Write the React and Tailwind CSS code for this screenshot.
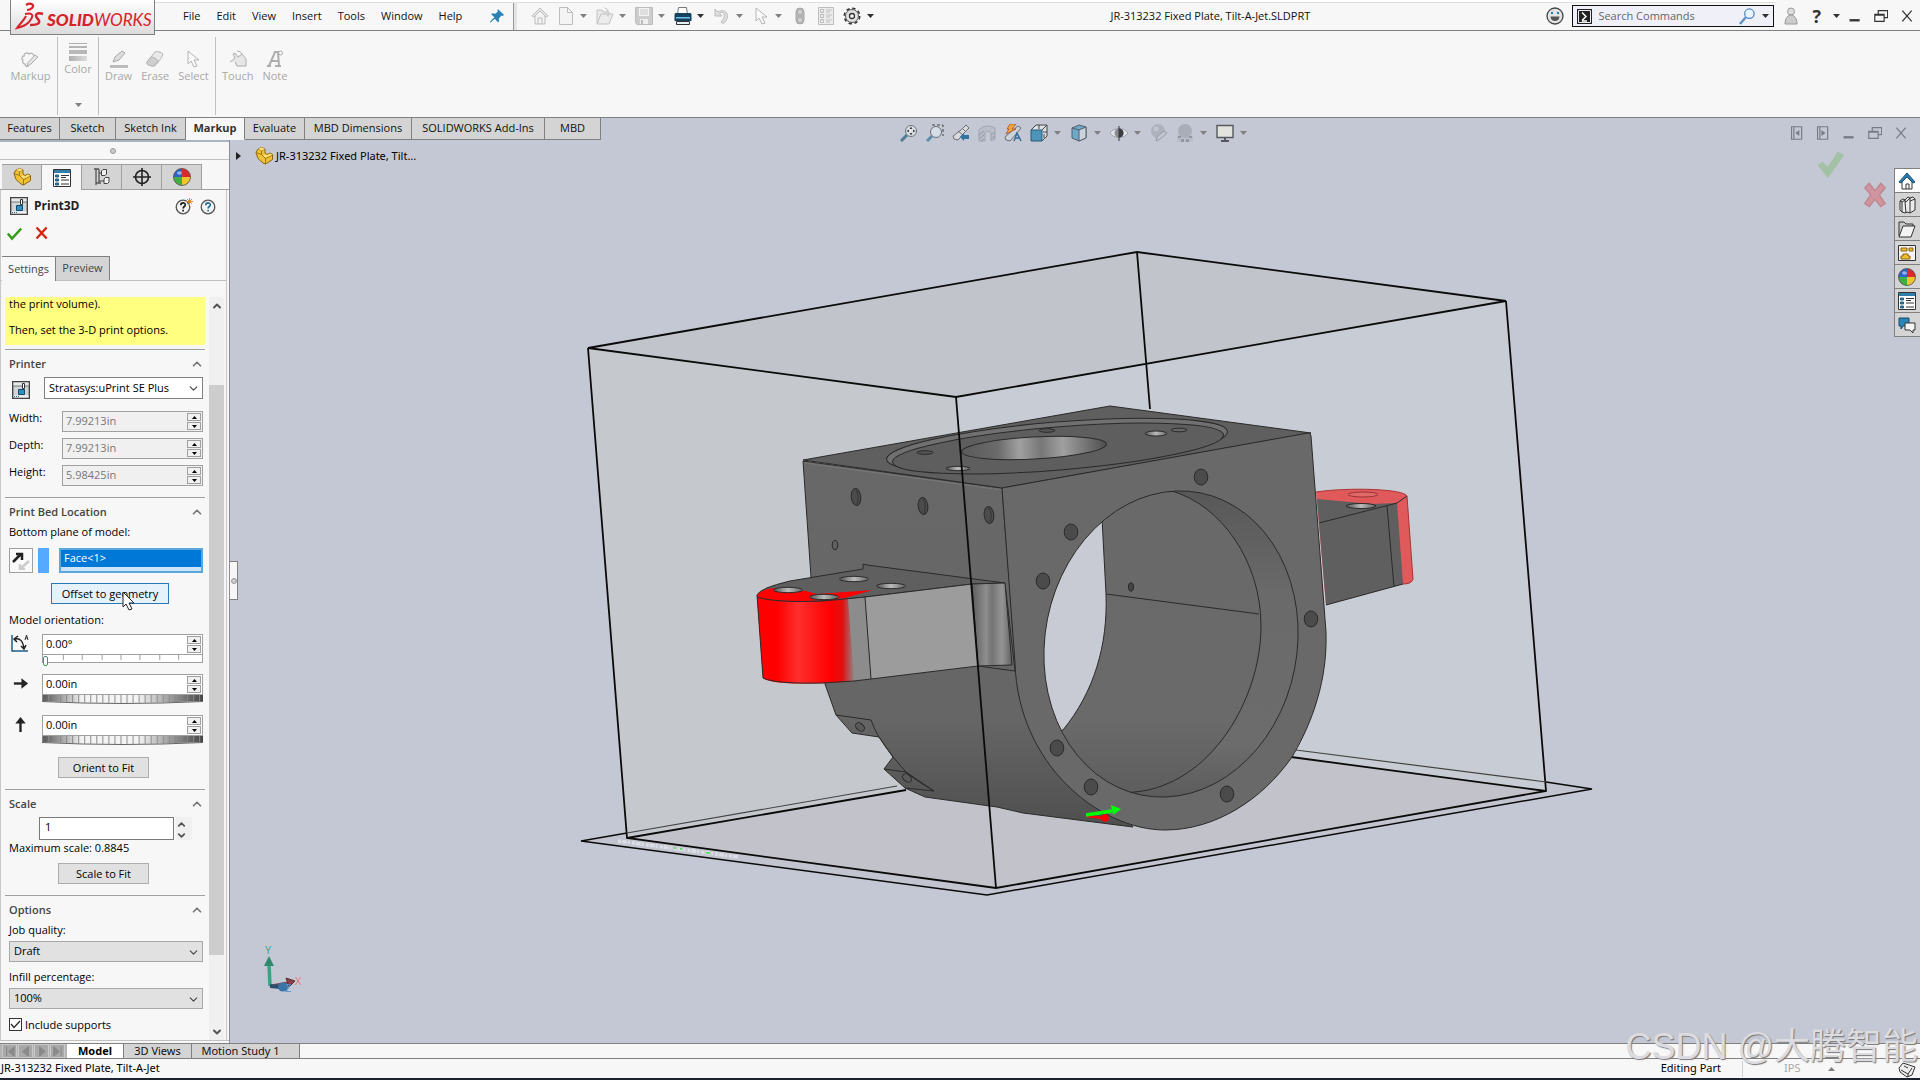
import { useState } from 'react';
import { ChevronUp, ChevronDown } from 'lucide-react';

const Svg = ({ size = 18, children, className = '' }) => (
  <svg width={size} height={size} viewBox="0 0 18 18" fill="none" className={`shrink-0 ${className}`} aria-hidden="true">
    {children}
  </svg>
);

const Caret = ({ dark, up }) => (
  <svg width="7" height="4" viewBox="0 0 7 4" className="shrink-0" aria-hidden="true">
    <path d={up ? 'M0 4h7L3.5 0z' : 'M0 0h7L3.5 4z'} fill={dark ? '#303030' : '#808080'} />
  </svg>
);

// ---- ribbon icons ----
const MarkupIcon = () => (
  <Svg>
    <path d="M8 16c-2 1-4 0-4-2-2 0-3-2-2-4-2-1-1-4 1-4 0-3 3-4 5-2 2-2 5 0 5 2" stroke="#b4b4b4" strokeWidth="1.3" />
    <path d="M7 12.500 14 5l3 2-7 7-4 2z" fill="#e4e4e4" stroke="#b0b0b0" />
  </Svg>
);
const ColorIcon = () => (
  <Svg>
    <defs>
      <linearGradient id="fade"><stop offset="0" stopColor="#b0b0b0" /><stop offset="1" stopColor="#dcdcdc" /></linearGradient>
    </defs>
    <path d="M0 .5h18" stroke="#b0b0b0" />
    <path d="M0 4h18" stroke="#b4b4b4" strokeWidth="2" />
    <path d="M0 7h18v4H0z" fill="#b8b8b8" />
    <path d="M0 13h18v5H0z" fill="url(#fade)" />
  </Svg>
);
const DrawIcon = () => (
  <Svg>
    <path d="m3 12 2-5 7-6 3 2-6 7z" fill="#dcdcdc" stroke="#a9a9a9" />
    <path d="M0 16.500h18" stroke="#bcbcbc" strokeWidth="3" />
  </Svg>
);
const EraseIcon = () => (
  <Svg>
    <path d="M1 12 9 2c1-1 7 0 8 2 0 2-7 12-9 12-3 0-8-1-7-4z" fill="#e9e9e9" stroke="#b4b4b4" />
    <path d="M5 7c3 0 6 2 7 4l-4 5c-3 0-8-1-7-4z" fill="#cfcfcf" stroke="#b4b4b4" />
  </Svg>
);
const PointerIcon = () => (
  <Svg>
    <path d="M4 1v13l3-3 3 6 3-1-3-6h5z" fill="#fafafa" stroke="#b4b4b4" />
  </Svg>
);
const TouchIcon = () => (
  <Svg>
    <path d="m1 12 5-4-2-4 2-1 3 4 4-3 4 5v7H8l-2-4" fill="#e6e6e6" stroke="#adadad" />
    <path d="M8 1a5 5 0 0 1 5 3" stroke="#adadad" />
  </Svg>
);
const NoteIcon = () => (
  <Svg>
    <path d="M1 16h4M9 16h6M3 16 9 2h3l1 14M6 11h7" stroke="#adadad" strokeWidth="2" />
    <circle cx="14.500" cy="3" r="2" stroke="#adadad" />
  </Svg>
);

// ---- quick access icons ----
const HomeIcon = () => (
  <Svg>
    <path d="M4 8v9h10V8" fill="#f2f2f2" stroke="#bdbdbd" />
    <path d="m1 9 8-8 8 8-2 1-6-6-6 6z" fill="#e4e4e4" stroke="#bdbdbd" />
    <path d="M7 17v-6h4v6" stroke="#bdbdbd" />
  </Svg>
);
const NewIcon = () => (
  <Svg>
    <path d="M2.500.5h8l5 5v12h-13z" fill="#f4f4f4" stroke="#bdbdbd" />
    <path d="M10.500.5v5h5" stroke="#bdbdbd" />
  </Svg>
);
const OpenIcon = () => (
  <Svg>
    <path d="M1 16V3h5l1 2h6v2" fill="#e9e9e9" stroke="#c2c2c2" />
    <path d="m1 17 4-10h12l-4 10z" fill="#ececec" stroke="#c2c2c2" />
    <path d="M6 1c4 0 5 2 5 5H9l3 4 3-4h-2c0-4-3-6-7-5z" fill="#cfcfcf" />
  </Svg>
);
const SaveIcon = () => (
  <Svg>
    <path d="M.5.5h17v17H2l-1.500-2z" fill="#cdcdcd" stroke="#bcbcbc" />
    <path d="M4 1h10v8H4z" fill="#f4f4f4" />
    <path d="M5 3h8M5 5h8M5 7h8" stroke="#c8c8c8" />
    <path d="M5 12h8v5H5z" fill="#efefef" />
    <path d="M7 13v4" stroke="#bbb" strokeWidth="2" />
  </Svg>
);
const PrintIcon = () => (
  <Svg>
    <path d="M4.500.5h8l1 7h-10z" fill="#fff" stroke="#777" />
    <path d="M.5 8c0-2 1-2 2-2h13c1 0 2 0 2 2v6H.5z" fill="#17415c" />
    <path d="M2 10h14v1.500H2z" fill="#6dc3ea" />
    <path d="M2.500 14.500h13v3h-13z" fill="#e8f1f5" stroke="#333" />
  </Svg>
);
const UndoIcon = () => (
  <Svg>
    <path d="M2 2v7h7L6.500 6.500C11 3 14 9 8 15l2 1.500C19 10 13 0 5 5z" fill="#dedede" stroke="#bababa" />
  </Svg>
);
const TrafficIcon = () => (
  <Svg>
    <rect x="5" y="1" width="8" height="16" rx="4" fill="#b5b5b5" stroke="#a6a6a6" />
    <circle cx="9" cy="5" r="2" fill="#cfcfcf" />
    <circle cx="9" cy="13" r="2" fill="#cfcfcf" />
  </Svg>
);
const ListIcon = () => (
  <Svg>
    <path d="M1.500.5h15v17h-15z" fill="#ececec" stroke="#bdbdbd" />
    <path d="M3.500 2.500h3v3h-3zM3.500 7.500h3v3h-3zM3.500 12.500h3v3h-3zM9 3h6M9 5h4M9 8h6M9 10h4M9 13h6M9 15h4" stroke="#bdbdbd" />
  </Svg>
);
const GearIcon = () => (
  <Svg>
    <circle cx="9" cy="9" r="7.700" stroke="#333" strokeWidth="1.600" strokeDasharray="3.400 2.650" />
    <circle cx="9" cy="9" r="6.500" fill="#e0e0e0" stroke="#555" />
    <circle cx="9" cy="9" r="2.500" fill="#f7f7f7" stroke="#333" strokeWidth="1.300" />
  </Svg>
);
const PinIcon = () => (
  <Svg size={16}>
    <path d="m10 1 7 7-2 1-1-.500-3 3.500.500 3-1.500 1-3.500-4L2 16l-1 1 .500-2L6 10.500 2.500 7 4 6l3 .500L10 4l-.500-1z" fill="#2b83b5" />
  </Svg>
);

// ---- heads-up view toolbar icons ----
const ZoomFitIcon = () => (
  <Svg>
    <path d="m1 17 6-6" stroke="#4c7d99" strokeWidth="3" />
    <circle cx="11" cy="7" r="5.500" fill="#dfe4ea" stroke="#6b7178" />
    <path d="M11 2.500 12.500 5h-3zM11 11.500 12.500 9h-3zM6.500 7 9 5.500v3zM15.500 7 13 5.500v3z" fill="#444" />
  </Svg>
);
const ZoomAreaIcon = () => (
  <Svg>
    <path d="M6 1h11v11" stroke="#444" strokeDasharray="3 2" />
    <path d="m1 17 5-5" stroke="#5b8eaa" strokeWidth="3" />
    <circle cx="10" cy="8" r="5.500" fill="#d5dde6" stroke="#6b7178" />
  </Svg>
);
const PrevViewIcon = () => (
  <Svg>
    <path d="m1 12 8-6 5-5 3 3-5 5-6 7-4-1z" fill="#d8dadd" stroke="#6b6f75" />
    <path d="m6 7 5 4M10 4l4 4" stroke="#6b6f75" />
    <path d="M17 11h-5V9l-4 4 4 4v-2h5z" fill="#2f75a0" />
  </Svg>
);
const SectionIcon = () => (
  <Svg>
    <path d="M1 6C5 1 12 1 17 4v11l-4 2V9c-2-2-4-2-6-1v9H1z" fill="#b9bdc8" stroke="#a1a5b0" />
    <path d="m1 11 5-4M1 15l5-4M3 17l3-2M13 11l4-3M13 15l4-3" stroke="#9499a5" />
  </Svg>
);
const DynamicIcon = () => (
  <Svg>
    <path d="m1 13 8-7 5-4 3 2-5 6-6 7-4-1z" fill="#cfd2d6" stroke="#6b6f75" />
    <path d="M6 0h6L8 5h4L2 10l3-5H3z" fill="#f0a63a" stroke="#a8513a" strokeWidth=".8" />
    <path d="m10 17 3-8 4 8M11 14h5" stroke="#2f6f9b" strokeWidth="1.500" />
  </Svg>
);
const ViewOrientIcon = () => (
  <Svg>
    <path d="m1 6 5-5h11v11l-5 5" fill="#dce1e8" stroke="#444" />
    <path d="M1 6h11v11H1z" fill="#4e94b8" stroke="#2a5b78" />
    <path d="M12 6l5-5M9 1v4M17 8h-4M14 10v4" stroke="#444" />
  </Svg>
);
const CubeIcon = () => (
  <Svg>
    <path d="M2 4 9 1l7 2v11l-7 3-7-3z" fill="#6fa9c9" stroke="#55606b" />
    <path d="M9 6v11l7-3V3z" fill="#c9d4dd" stroke="#55606b" />
    <path d="M2 4l7 2" stroke="#55606b" />
  </Svg>
);
const EyeIcon = () => (
  <Svg>
    <path d="M0 9c4-6 14-6 18 0-4 6-14 6-18 0z" fill="#e4e6ea" stroke="#a0a4ac" />
    <circle cx="9" cy="9" r="4.500" fill="#8a8e93" />
    <path d="M9 2v15" stroke="#333" />
    <path d="M9 4.500a4.500 4.500 0 0 1 0 9z" fill="#3a3d41" />
  </Svg>
);
const AppearanceIcon = () => (
  <Svg>
    <circle cx="8" cy="7" r="7" fill="#aeb2bd" />
    <circle cx="6" cy="5" r="2.500" fill="#c0c4ce" />
    <path d="m6 17 1-4 7-6 3 2-7 6z" fill="#c4c8d2" stroke="#9599a5" />
  </Svg>
);
const SceneIcon = () => (
  <Svg>
    <circle cx="9" cy="7" r="7" fill="#a9adb8" />
    <path d="M1 11h3l2 3h6l2-3h3v7H1z" fill="#b9bdc8" />
    <path d="M2 12h3v2H2zM5 15h3v3H5zM10 15h3v3h-3zM13 12h3v2h-3z" fill="#9296a2" />
  </Svg>
);
const MonitorIcon = () => (
  <Svg>
    <path d="M1 1.500h16v12H1z" fill="#e1e3dc" stroke="#55585e" strokeWidth="1.400" />
    <path d="M9 14v2M5 17h8" stroke="#55585e" strokeWidth="2" />
  </Svg>
);

// ---- property manager icons ----
const PartIcon = () => (
  <Svg>
    <path d="M1 5.500 3 2l3.500-1.500L10 2v4l2 1.500L15 6l2.500 1.500v5L10.500 17 8 16 3 11.500z" fill="#f1c232" stroke="#8a6514" />
    <path d="M3 2l3.500 1.500L10 2M6.500 3.500v4l4 4 3-1 4-3M10.500 11.500V17M1 5.500l5.500 2" stroke="#8a6514" strokeWidth=".8" />
    <path d="m3 2 3.500-1.500L10 2 6.500 3.500zM10.500 10.500 8 8.500l2.500-1L12 8.500l3-2 2 1.200z" fill="#ffe27a" />
  </Svg>
);
const PropsIcon = () => (
  <Svg>
    <path d="M.5.5h17v17H.5z" fill="#fff" stroke="#333" />
    <path d="M1 2.500h16" stroke="#2f7fa8" strokeWidth="3" />
    <path d="M2.500 6h3v2h-3zM2.500 10h3v2h-3zM2.500 14h3v2h-3z" fill="#2f7fa8" stroke="#235d7c" />
    <path d="M8 6.500h8M8 8.500h5M8 11h8M8 15h8" stroke="#333" />
  </Svg>
);
const ConfigIcon = () => (
  <Svg>
    <path d="M3 1v16M1 1h5M3 15h5M6 1v14" stroke="#555" strokeWidth="1.300" />
    <path d="M8.500 3 10 1.500h3.500V6L12 7.500H8.500zM11 11l1.500-1.500H16V14l-1.500 1.500H11zM6 5h2M6 13h5" fill="#f0f0f0" stroke="#444" />
  </Svg>
);
const TargetIcon = () => (
  <Svg>
    <circle cx="9" cy="9" r="6.500" stroke="#222" strokeWidth="1.600" />
    <path d="M9 0v18M0 9h18" stroke="#222" strokeWidth="1.600" />
  </Svg>
);
const BallIcon = () => (
  <Svg>
    <circle cx="9" cy="9" r="8.500" fill="#d92b2b" />
    <path d="M9 9V.5A8.500 8.500 0 0 0 .5 9z" fill="#2f62c9" />
    <path d="M9 9H.5A8.500 8.500 0 0 0 9 17.500z" fill="#3fae49" />
    <path d="M9 9v8.500A8.500 8.500 0 0 0 17.500 9z" fill="#f0c330" />
    <circle cx="9" cy="9" r="8.500" stroke="#555" strokeWidth=".8" />
    <ellipse cx="6.500" cy="5" rx="2.500" ry="1.800" fill="#fff" opacity=".5" />
  </Svg>
);
const PrinterIcon = () => (
  <Svg>
    <path d="M.7.7h16.600v16.600H.7z" fill="#d2d5d7" stroke="#444" strokeWidth="1.400" />
    <path d="M1.500 1.500h15V5h-15z" fill="#e8e9ea" />
    <path d="M1 5h9M13 5h4" stroke="#777" />
    <path d="M10.500 2.500h2v5h-2z" fill="#fff" stroke="#333" />
    <path d="M6.500 8.500h6v5h-6z" fill="#2f8fbf" stroke="#124a68" />
    <path d="M1.500 14.500h15v2h-15z" fill="#f2f2f2" />
    <path d="M2 15.500h6" stroke="#1d6a96" strokeDasharray="1 1" />
  </Svg>
);
const HelpIcon = ({ star }) => (
  <Svg>
    <circle cx="8" cy="10" r="6.800" fill="#f4f4f4" stroke="#555" strokeWidth="1.300" />
    <path d="M5.800 8.200c0-3 4.500-3 4.500-.400 0 1.700-2.200 1.700-2.200 3.700M8.100 12.800v1.700" stroke={star ? '#222' : '#2a6f99'} strokeWidth="1.700" />
    {star && <path d="M14.500 1v7M11 4.500h7M12 2l5 5M17 2l-5 5" stroke="#d98a2b" />}
  </Svg>
);

const Logo = () => (
  <div className="relative z-20 -mt-0.5 flex h-[35px] w-[145px] shrink-0 items-end self-start border border-t-0 border-[#808080] bg-linear-to-b from-white to-[#dcdcdc] pb-0.5 pl-1">
    <svg width="30" height="30" viewBox="0 0 30 30" fill="none" stroke="#d6222a" aria-hidden="true">
      <path d="M11 3c5-3 9 0 6 3-1 1-3 2-5 2" strokeWidth="2.200" />
      <path d="M10 12c10-2 8 3 4 8-3 3-7 5-12 6 3-4 7-8 9-12" strokeWidth="2" />
      <path d="M28 12c-5-2-9 0-6 4 4 4 3 7-7 7" strokeWidth="2.500" />
    </svg>
    <span className="ml-0.5 font-['Lato','Open_Sans',sans-serif] text-[17px] leading-6 italic text-[#d6222a]">
      <b className="font-black">SOLID</b>WORKS
    </span>
  </div>
);

const menus = ['File', 'Edit', 'View', 'Insert', 'Tools', 'Window', 'Help'];

const quickTools = [
  { name: 'New', icon: <NewIcon /> },
  { name: 'Open', icon: <OpenIcon /> },
  { name: 'Save', icon: <SaveIcon /> },
  { name: 'Print', icon: <PrintIcon />, dark: true },
  { name: 'Undo', icon: <UndoIcon /> },
  { name: 'Select', icon: <PointerIcon /> },
];

const WindowControls = ({ muted }) => (
  <div className={`flex items-center gap-3 ${muted ? 'text-[#777b86]' : 'text-[#333]'}`}>
    <button aria-label="Minimize"><Svg size={14}><path d="M2 14.500h13" stroke="currentColor" strokeWidth="3" /></Svg></button>
    <button aria-label="Restore"><Svg size={14}><path d="M5.500 6V2h12v9h-4M1 7h12v9H1zM1 8h12" stroke="currentColor" strokeWidth="1.500" /></Svg></button>
    <button aria-label="Close"><Svg size={14}><path d="m3 2 12 14M15 2 3 16" stroke="currentColor" strokeWidth="1.600" /></Svg></button>
  </div>
);

const TitleBar = () => (
  <header className="relative flex h-[31px] shrink-0 items-center border-b border-[#808080] bg-[#f7f7f7] pt-0.5 pl-2.5">
    <div className="absolute top-0 right-36 left-36 h-[3px] border-b border-[#e0e0e0] bg-white" />
    <Logo />
    <nav className="ml-7 flex gap-4">
      {menus.map((m) => (
        <button key={m} className="leading-4">{m}</button>
      ))}
    </nav>
    <button aria-label="Pin" className="ml-[27px]"><PinIcon /></button>
    <div className="mr-3.5 ml-2 h-7 w-1 border-l border-[#999] bg-[#e4e4e4]" />
    <div className="flex items-center">
      <button aria-label="Home" className="w-[26px]"><HomeIcon /></button>
      {quickTools.map((t) => (
        <button key={t.name} aria-label={t.name} className="flex w-[39px] items-center gap-[5px]">
          {t.icon}
          <Caret dark={t.dark} />
        </button>
      ))}
      <button aria-label="Rebuild" className="w-[26px]"><TrafficIcon /></button>
      <button aria-label="File properties" className="w-[26px]"><ListIcon /></button>
      <button aria-label="Options" className="flex items-center gap-1.5"><GearIcon /><Caret dark /></button>
    </div>
    <h1 className="flex-1 text-center">JR-313232 Fixed Plate, Tilt-A-Jet.SLDPRT</h1>
    <Svg className="mr-2">
      <circle cx="9" cy="9" r="8" fill="#e4e4e4" stroke="#444" strokeWidth="1.300" />
      <path d="M4.500 9.500h9c0 6-9 6-9 0z" fill="#555" />
      <circle cx="6" cy="6" r="1.200" fill="#2a7fb0" />
      <circle cx="12" cy="6" r="1.200" fill="#2a7fb0" />
    </Svg>
    <label className="flex h-[22px] w-[202px] items-center border border-[#111] bg-[#f0f0f8] px-1">
      <svg width="15" height="15" viewBox="0 0 15 15" aria-hidden="true">
        <path d="M0 0h15v15H0z" fill="#222" />
        <path d="M1.500 1.500h12v12h-12z" fill="none" stroke="#eee" />
        <path d="m5 3.500 4 4-4 4M5 12h5" fill="none" stroke="#fff" strokeWidth="1.500" />
      </svg>
      <input aria-label="Search Commands" placeholder="Search Commands" className="ml-1.5 w-0 flex-1 bg-transparent outline-none placeholder:text-[#666]" />
      <Svg size={17}><path d="m1 17 6-7" stroke="#5b93c9" strokeWidth="2.500" /><circle cx="11" cy="6" r="5" fill="#eaf4fb" stroke="#4d86bf" strokeWidth="1.300" /></Svg>
      <span className="ml-1.5"><Caret dark /></span>
    </label>
    <div className="mr-2 ml-2 flex items-center gap-3">
      <button aria-label="Sign in"><Svg><circle cx="9" cy="4.500" r="3.500" fill="#ddd" stroke="#999" /><path d="M3 17c0-12 12-12 12 0z" fill="#ccc" stroke="#999" /></Svg></button>
      <button aria-label="Help" className="flex items-center gap-3 text-lg leading-5 font-bold text-[#333]">?<Caret dark /></button>
    </div>
    <div className="pr-1.5"><WindowControls /></div>
  </header>
);

const RibbonButton = ({ icon, label }) => (
  <button disabled className="flex flex-col items-center text-[#a8a8a8]">
    {icon}
    <span className="leading-4">{label}</span>
  </button>
);

const Ribbon = () => (
  <div className="flex h-[87px] shrink-0 items-start border-b border-[#808080] bg-[#f7f7f7] pt-1.5">
    <div className="flex h-[78px] w-[58px] justify-center border-r border-[#c0c0c0] pt-[13px] pl-1">
      <RibbonButton icon={<MarkupIcon />} label="Markup" />
    </div>
    <div className="flex h-[78px] w-[41px] flex-col items-center justify-between border-r border-[#c0c0c0] pt-1.5 pb-2">
      <RibbonButton icon={<ColorIcon />} label="Color" />
      <Caret />
    </div>
    <div className="flex h-[78px] w-[117px] gap-[9px] border-r border-[#c0c0c0] pt-[13px] pl-1.5">
      <RibbonButton icon={<DrawIcon />} label="Draw" />
      <RibbonButton icon={<EraseIcon />} label="Erase" />
      <RibbonButton icon={<PointerIcon />} label="Select" />
    </div>
    <div className="flex gap-[9px] pt-[13px] pl-1.5">
      <RibbonButton icon={<TouchIcon />} label="Touch" />
      <RibbonButton icon={<NoteIcon />} label="Note" />
    </div>
  </div>
);

const ribbonTabs = [
  { name: 'Features', w: 'w-[60px]' },
  { name: 'Sketch', w: 'w-[56px]' },
  { name: 'Sketch Ink', w: 'w-[70px]' },
  { name: 'Markup', w: 'w-[59px]' },
  { name: 'Evaluate', w: 'w-[60px]' },
  { name: 'MBD Dimensions', w: 'w-[107px]' },
  { name: 'SOLIDWORKS Add-Ins', w: 'w-[133px]' },
  { name: 'MBD', w: 'w-[56px]' },
];

const viewTools = [
  { name: 'Zoom to Fit', icon: <ZoomFitIcon /> },
  { name: 'Zoom to Area', icon: <ZoomAreaIcon /> },
  { name: 'Previous View', icon: <PrevViewIcon /> },
  { name: 'Section View', icon: <SectionIcon /> },
  { name: 'Dynamic Annotation Views', icon: <DynamicIcon /> },
  { name: 'View Orientation', icon: <ViewOrientIcon />, menu: true },
  { name: 'Display Style', icon: <CubeIcon />, menu: true },
  { name: 'Hide/Show Items', icon: <EyeIcon />, menu: true },
  { name: 'Edit Appearance', icon: <AppearanceIcon /> },
  { name: 'Apply Scene', icon: <SceneIcon />, menu: true },
  { name: 'View Settings', icon: <MonitorIcon />, menu: true },
];

const TabRow = () => {
  const [active, setActive] = useState('Markup');
  return (
    <div className="relative z-10 flex h-[22px] shrink-0 items-start">
      <div role="tablist" className="flex">
        {ribbonTabs.map((t) => (
          <button
            key={t.name}
            role="tab"
            aria-selected={active === t.name}
            onClick={() => setActive(t.name)}
            className={`h-[22px] border-r border-b border-[#808080] whitespace-nowrap ${t.w} ${
              active === t.name ? 'border-b-[#f7f7f7] bg-[#f7f7f7] font-bold text-[#333]' : 'bg-[#d4d4d4] text-[#111]'
            }`}
          >
            {t.name}
          </button>
        ))}
      </div>
      <div className="ml-[295px] flex h-[29px] items-center">
        {viewTools.map((t) => (
          <button key={t.name} aria-label={t.name} className={`flex items-center ${t.menu ? 'w-10 gap-1.5' : 'w-[26px]'} pl-1`}>
            {t.icon}
            {t.menu && <Caret />}
          </button>
        ))}
      </div>
      <div className="mr-3 ml-auto flex h-[29px] items-center gap-3 text-[#777b86]">
        <button aria-label="Previous pane"><Svg size={14}><path d="M2 1h13v16H2zM5 1v16" stroke="currentColor" strokeWidth="1.500" /><path d="M12 5v8L7 9z" fill="currentColor" /></Svg></button>
        <button aria-label="Next pane"><Svg size={14}><path d="M2 1h13v16H2zM5 1v16" stroke="currentColor" strokeWidth="1.500" /><path d="M7 5v8l5-4z" fill="currentColor" /></Svg></button>
        <WindowControls muted />
      </div>
    </div>
  );
};

const Section = ({ title, children, className = '' }) => (
  <section className={`border-t border-[#a0a0a0] ${className}`}>
    <div className="flex h-[27px] items-center justify-between pt-px pr-px pl-1">
      <h3 className="font-semibold text-[#444]">{title}</h3>
      <button aria-label={`Collapse ${title}`}>
        <ChevronUp size={14} strokeWidth={3} className="text-[#777]" />
      </button>
    </div>
    <div className="pr-0.5 pl-1">{children}</div>
  </section>
);

const Spinner = () => (
  <span className="flex w-[14px] flex-col gap-px py-px">
    <button aria-label="Increase" className="flex flex-1 items-center justify-center border border-[#a0a0a0] bg-[#f0f0f0]">
      <svg width="5" height="3" aria-hidden="true"><path d="M0 3h5L2.500 0z" /></svg>
    </button>
    <button aria-label="Decrease" className="flex flex-1 items-center justify-center border border-[#a0a0a0] bg-[#f0f0f0]">
      <svg width="5" height="3" aria-hidden="true"><path d="M0 0h5L2.500 3z" /></svg>
    </button>
  </span>
);

const NumberBox = ({ id, value, disabled, label }) => (
  <div className={`flex h-[21px] min-w-0 flex-1 border border-[#a0a0a0] pr-px ${disabled ? 'bg-[#f0f0f0] text-[#777]' : 'bg-white text-black'}`}>
    <input id={id} aria-label={label} defaultValue={value} disabled={disabled} className="h-[17px] w-0 flex-1 bg-transparent pl-[3px] outline-none" />
    <Spinner />
  </div>
);

const SelectBox = ({ id, value, label, className = '' }) => (
  <div className={`relative flex-1 border ${className}`}>
    <select id={id} aria-label={label} defaultValue={value} className="block h-full w-full appearance-none bg-transparent pl-1 text-black outline-none">
      <option>{value}</option>
    </select>
    <ChevronDown size={13} className="pointer-events-none absolute top-1 right-0.5 text-[#444]" />
  </div>
);

const ThumbWheel = () => (
  <svg width="100%" height="10" viewBox="0 0 160 10" preserveAspectRatio="none" aria-hidden="true">
    <defs>
      <linearGradient id="wheel">
        <stop offset="0" stopColor="#555" />
        <stop offset=".25" stopColor="#f4f4f4" />
        <stop offset=".6" stopColor="#f4f4f4" />
        <stop offset="1" stopColor="#444" />
      </linearGradient>
      <pattern id="ribs" width="6" height="10" patternUnits="userSpaceOnUse">
        <path d="M.5 0v8" stroke="#888" />
      </pattern>
    </defs>
    <path d="M0 0h160v6q-80 4-160 0z" fill="url(#wheel)" />
    <path d="M0 0h160v6q-80 4-160 0z" fill="url(#ribs)" />
    <path d="M0 6.500q80 4 160 0" stroke="#666" fill="none" />
  </svg>
);

const PushButton = ({ children, active, className }) => (
  <button className={`block h-[21px] border leading-4 text-black ${active ? 'border-[#2a7ab8] bg-[#e5f1fb]' : 'border-[#adadad] bg-[#e1e1e1]'} ${className}`}>
    {children}
  </button>
);

const dimensions = [
  { id: 'width', label: 'Width:', value: '7.99213in' },
  { id: 'depth', label: 'Depth:', value: '7.99213in' },
  { id: 'height', label: 'Height:', value: '5.98425in' },
];

const panelTabs = [
  { name: 'FeatureManager', icon: <PartIcon /> },
  { name: 'PropertyManager', icon: <PropsIcon />, active: true },
  { name: 'ConfigurationManager', icon: <ConfigIcon /> },
  { name: 'DimXpertManager', icon: <TargetIcon /> },
  { name: 'DisplayManager', icon: <BallIcon /> },
];

const PropertyPanel = () => (
  <aside className="flex w-[230px] shrink-0 flex-col border-r border-[#8a8d96] bg-[#f7f7f7]">
    <div className="flex h-5 shrink-0 items-center justify-center border-t-2 border-b border-t-[#a9b4c0] border-b-[#c0c0c0] pr-1">
      <span className="h-1.5 w-1.5 rounded-full border border-[#999] bg-[#ccc]" />
    </div>
    <div className="mt-1 flex h-[26px] shrink-0 border-b border-[#a0a0a0] pl-0.5">
      {panelTabs.map((t) => (
        <button
          key={t.name}
          aria-label={t.name}
          className={`flex w-10 items-center justify-center border-t border-r border-[#a0a0a0] ${t.active ? '-mb-px bg-[#f7f7f7]' : 'bg-[#d4d4d4]'}`}
        >
          {t.icon}
        </button>
      ))}
    </div>
    <div className="mr-0.5 flex min-h-0 flex-1 flex-col border-r border-l border-[#c8c8c8]">
      <div className="flex h-8 shrink-0 items-center pr-2 pl-[9px]">
        <PrinterIcon />
        <h2 className="ml-1.5 text-xs font-bold text-[#222]">Print3D</h2>
        <button aria-label="What's new" className="ml-auto"><HelpIcon star /></button>
        <button aria-label="Help" className="ml-[7px]"><HelpIcon /></button>
      </div>
      <div className="flex h-[34px] shrink-0 gap-[13px] pt-1 pl-1.5">
        <button aria-label="OK" className="self-start"><Svg size={15}><path d="m1 9 5 6L17 3" stroke="#3a9a1c" strokeWidth="3" /></Svg></button>
        <button aria-label="Cancel" className="self-start"><Svg size={14}><path d="m2 2 13 14M15 2 2 16" stroke="#d8230c" strokeWidth="3" /></Svg></button>
      </div>
      <div className="flex h-[25px] shrink-0 border-b border-[#c0c0c0] pl-px text-[#444]">
        <button className="-mb-px w-[54px] border-t border-r border-[#808080] bg-[#f7f7f7]">Settings</button>
        <button className="w-[54px] border-t border-r border-[#808080] bg-[#d4d4d4]">Preview</button>
      </div>
      <div className="mt-4 flex min-h-0 flex-1">
        <div className="mr-1 ml-1 flex-1 overflow-hidden text-black">
          <div className="flex h-12 flex-col bg-[#ffff80] pl-1">
            <p className="leading-[14px]">the print volume).</p>
            <p className="mt-3 leading-[14px]">Then, set the 3-D print options.</p>
          </div>

          <Section title="Printer" className="mt-1">
            <div className="flex items-center">
              <span className="ml-[3px] w-8 pt-1"><PrinterIcon /></span>
              <SelectBox value="Stratasys:uPrint SE Plus" label="Printer" className="h-[22px] border-[#808080] bg-white" />
            </div>
            <div className="mt-3 flex flex-col gap-1.5 pb-[11px]">
              {dimensions.map((d) => (
                <div key={d.id} className="flex items-start">
                  <label htmlFor={d.id} className="w-[53px] leading-[14px]">{d.label}</label>
                  <NumberBox id={d.id} value={d.value} disabled />
                </div>
              ))}
            </div>
          </Section>

          <Section title="Print Bed Location">
            <label htmlFor="plane" className="block leading-[14px]">Bottom plane of model:</label>
            <div className="mt-[9px] flex h-[25px] items-stretch">
              <button aria-label="Reverse direction" className="flex w-6 items-center justify-center border border-[#a0a0a0] bg-[#fafafa]">
                <Svg>
                  <path d="M17 9 8 17m0-5v5h5" stroke="#ccc" strokeWidth="2.500" />
                  <path d="m1 10 8-8M4 2h6v6" stroke="#222" strokeWidth="2.500" />
                </Svg>
              </button>
              <span className="ml-[5px] w-[11px] bg-[#55aaff]" />
              <div className="ml-2.5 flex-1 border-2 border-[#5aa7dc] bg-[#cce4f7]">
                <input id="plane" readOnly value="Face<1>" className="block h-[17px] w-full bg-[#0078d7] pb-0.5 pl-[3px] text-white outline-none" />
              </div>
            </div>
            <PushButton active className="mt-2.5 ml-[42px] w-[118px]">Offset to geometry</PushButton>
            <p className="mt-2 leading-4">Model orientation:</p>
            <div className="mt-1.5 flex items-start">
              <span className="w-[33px] pl-0.5">
                <Svg>
                  <path d="M1 1v16h16" stroke="#1f5f85" strokeWidth="1.500" />
                  <path d="M4 5c6-1 8 3 9 9M7 2 3 5l3 3M10 12l3 3 2-4" stroke="#222" strokeWidth="1.500" />
                  <path d="m14 6 1.500-5L17 6M14.500 4h2" stroke="#333" />
                </Svg>
              </span>
              <div className="flex flex-1 flex-col">
                <div className="flex"><NumberBox value="0.00°" label="Rotation" /></div>
                <div className="relative h-2 border border-t-0 border-[#a0a0a0] bg-white">
                  <svg width="100%" height="5" viewBox="0 0 160 5" preserveAspectRatio="none" className="block" aria-hidden="true">
                    <path d="M20.500 0v5M39.500 0v5M59.500 0v5M78.500 0v5M97.500 0v5M117.500 0v5M136.500 0v5" stroke="#a0a0a0" />
                  </svg>
                  <input
                    type="range"
                    aria-label="Rotation slider"
                    defaultValue="0"
                    className="absolute inset-0 h-3 w-full appearance-none bg-transparent [&::-webkit-slider-thumb]:h-2.5 [&::-webkit-slider-thumb]:w-[5px] [&::-webkit-slider-thumb]:appearance-none [&::-webkit-slider-thumb]:rounded-xs [&::-webkit-slider-thumb]:border [&::-webkit-slider-thumb]:border-[#3c9a54] [&::-webkit-slider-thumb]:bg-white"
                  />
                </div>
              </div>
            </div>
            <div className="mt-[11px] flex items-start">
              <span className="w-[33px] pt-px pl-[3px]"><Svg size={17}><path d="M2 9h10" stroke="#222" strokeWidth="2.500" /><path d="m10 3.500 7 5.500-7 5.500z" fill="#222" /></Svg></span>
              <div className="flex flex-1 flex-col"><div className="flex"><NumberBox value="0.00in" label="X offset" /></div><ThumbWheel /></div>
            </div>
            <div className="mt-2.5 flex items-start">
              <span className="w-[33px] pt-px pl-[3px]"><Svg size={17}><path d="M9 17V6" stroke="#222" strokeWidth="2.500" /><path d="m3.500 8 5.500-7 5.500 7z" fill="#222" /></Svg></span>
              <div className="flex flex-1 flex-col"><div className="flex"><NumberBox value="0.00in" label="Y offset" /></div><ThumbWheel /></div>
            </div>
            <PushButton className="mt-[11px] mb-[11px] ml-[49px] w-[91px]">Orient to Fit</PushButton>
          </Section>

          <Section title="Scale">
            <div className="flex h-[23px] pl-[30px]">
              <input aria-label="Scale" defaultValue="1" className="w-[135px] border border-[#7a7a7a] bg-white pb-0.5 pl-[5px] outline-none" />
              <div className="ml-0.5 flex w-4 flex-col justify-between bg-[#f0f0f0] pt-0.5 text-[#555]">
                <button aria-label="Scale up"><ChevronUp size={11} strokeWidth={4} /></button>
                <button aria-label="Scale down"><ChevronDown size={11} strokeWidth={4} /></button>
              </div>
            </div>
            <p className="leading-4">Maximum scale: 0.8845</p>
            <PushButton className="mt-[7px] mb-[11px] ml-[49px] w-[91px]">Scale to Fit</PushButton>
          </Section>

          <Section title="Options">
            <label htmlFor="quality" className="block leading-[14px]">Job quality:</label>
            <div className="mt-1 flex"><SelectBox id="quality" value="Draft" className="h-[21px] border-[#a8a8a8] bg-[#e1e1e1]" /></div>
            <label htmlFor="infill" className="mt-[7px] block leading-4">Infill percentage:</label>
            <div className="mt-[3px] flex"><SelectBox id="infill" value="100%" className="h-[21px] border-[#a8a8a8] bg-[#e1e1e1]" /></div>
            <label className="mt-[9px] flex items-center gap-1 leading-[13px]">
              <input
                type="checkbox"
                defaultChecked
                className="peer h-[13px] w-[13px] appearance-none border border-[#333] bg-white"
              />
              <svg width="11" height="9" viewBox="0 0 11 9" className="pointer-events-none -ml-4 hidden peer-checked:block" aria-hidden="true">
                <path d="m1 4 3 3.500L10 1" fill="none" stroke="#222" strokeWidth="1.200" />
              </svg>
              Include supports
            </label>
          </Section>
        </div>
        <div className="mr-0.5 flex w-[15px] flex-col items-center bg-[#f0f0f0] text-[#555]">
          <ChevronUp size={12} strokeWidth={4} className="mt-[3px] mb-1 shrink-0" />
          <div className="flex-[69]" />
          <div className="w-full flex-[569] bg-[#cdcdcd]" />
          <div className="flex-[67]" />
          <ChevronDown size={12} strokeWidth={4} className="mt-1 mb-0.5 shrink-0" />
        </div>
      </div>
    </div>
    <div className="h-[3px] shrink-0 border-t border-[#c0c0c0]" />
  </aside>
);

const boreHoles = [
  [1201, 477], [1071, 532], [1043, 581], [1311, 619], [1057, 748], [1091, 787], [1227, 794],
];

const Model = () => (
  <svg viewBox="230 140 1690 903" preserveAspectRatio="xMidYMid slice" className="absolute inset-0 h-full w-full" role="img" aria-label="Fixed plate in print volume">
    <defs>
      <linearGradient id="red"><stop offset="0" stopColor="#f00" /><stop offset=".2" stopColor="#f00" /><stop offset=".42" stopColor="#ff2e2e" /><stop offset=".75" stopColor="#f00" /><stop offset=".87" stopColor="#e01010" /><stop offset="1" stopColor="#8c8c8c" /></linearGradient>
      <linearGradient id="fillet"><stop offset="0" stopColor="#5e5e5e" /><stop offset=".35" stopColor="#8e8e8e" /><stop offset=".5" stopColor="#747474" /><stop offset=".75" stopColor="#949494" /><stop offset="1" stopColor="#606060" /></linearGradient>
      <linearGradient id="bore"><stop offset="0" stopColor="#5a5a5a" /><stop offset=".25" stopColor="#6a6a6a" /><stop offset=".4" stopColor="#a0a0a0" /><stop offset=".55" stopColor="#777" /><stop offset=".7" stopColor="#a0a0a0" /><stop offset="1" stopColor="#4e4e4e" /></linearGradient>
      <linearGradient id="small"><stop offset="0" stopColor="#555" /><stop offset=".5" stopColor="#bbb" /><stop offset="1" stopColor="#666" /></linearGradient>
      <linearGradient id="side" x2="0" y2="1"><stop offset="0" stopColor="#686868" /><stop offset=".7" stopColor="#666" /><stop offset="1" stopColor="#4f4f4f" /></linearGradient>
      <linearGradient id="ring" x2="0" y2="1"><stop offset="0" stopColor="#565656" /><stop offset=".35" stopColor="#6a6a6a" /><stop offset=".8" stopColor="#6c6c6c" /><stop offset="1" stopColor="#585858" /></linearGradient>
      <linearGradient id="inner" x2="0" y2="1"><stop offset="0" stopColor="#696969" /><stop offset=".75" stopColor="#6a6a6a" /><stop offset="1" stopColor="#5c5c5c" /></linearGradient>
      <clipPath id="holeClip"><circle r="1" transform="matrix(127 -5 -5 153 1171 644)" /></clipPath>
    </defs>

    {/* print volume faces */}
    <path d="M581 841 1296 749 1592 789 987 895z" fill="#c2c5cf" />
    <path d="M588 348 1137 252 1506 301 1546 791 996 888 627 838z" fill="#c5c9ce" />
    <path d="M588 348 1137 252 1506 301 956 397z" fill="#c1c5cb" />
    <path d="M956 397 1506 301 1546 791 996 888z" fill="#c8ccd4" />
    <path d="M627 838 905 790 1292 757 1546 791 996 888z" fill="#c1c2ca" />
    <g fill="none" stroke="#0a0a0a" strokeWidth="1.800">
      <path d="M588 348 1137 252 1506 301 956 397zM588 348 627 838 996 888 1546 791 1506 301M1137 252 1150 409" />
      <path d="M627 838 906 790M1291 757 1546 791" />
      <path d="M627 833 581 841 987 895 1592 789 1546 782" strokeWidth="1.500" />
      <path d="M897 786 627 833M1296 750 1546 782" stroke="#444" strokeWidth="1.200" />
    </g>
    <path d="M618 841 738 857" stroke="#e2e4ea" strokeWidth="3.500" strokeDasharray="3 1 5 1 2 2" opacity=".8" fill="none" />
    <path d="M674 848h2M680 849h2M706 853h4" stroke="#3fe03f" strokeWidth="1.500" />

    <g stroke="#2a2a2a" strokeWidth="1">
      {/* right arm */}
      <path d="M1316 492C1350 487 1404 489 1407 496L1413 579Q1412 584 1403 584L1326 605z" fill="#e05a5c" stroke="none" />
      <path d="M1317 499 1372 504 1397 503 1403 584 1326 605z" fill="#5f5f5f" stroke="none" />
      <path d="M1319 523 1397 503 1407 496M1387 506 1394 587M1326 605 1403 584" fill="none" />
      <path d="M1316 492C1350 487 1404 489 1407 496L1413 579Q1412 584 1403 584" fill="none" stroke="#a33" />
      <ellipse cx="1363" cy="494.500" rx="15" ry="2.500" fill="#e2696a" stroke="#933" />
      <ellipse cx="1361" cy="506" rx="15" ry="2.500" fill="url(#small)" />

      {/* body side and top */}
      <path d="M803 461 1002 488 1016 663 1133 827 1023 813 997 807 925 797 905 788 884 769 893 757 879 737 852 733 836 715 825 684 811 577z" fill="url(#side)" />
      <path d="M836 715 871 720Q874 729 879 737Q886 748 893 757L906 772 934 791Q915 780 906 772L884 769M934 791 905 788" fill="none" />
      <ellipse cx="860" cy="727" rx="5" ry="3.500" fill="#595959" transform="rotate(40 860 727)" />
      <ellipse cx="907" cy="778" rx="5" ry="3.500" fill="#595959" transform="rotate(40 907 778)" />
      <path d="M803 460 1110 406 1311 433 1002 488z" fill="#5f5f5f" />
      <path d="M805 463 1002 490" stroke="#777" />
      <ellipse cx="1057" cy="445.500" rx="171" ry="23.500" fill="#707070" transform="rotate(-4.700 1057 445)" />
      <ellipse cx="1058" cy="448.500" rx="166" ry="21.500" fill="#5e5e5e" transform="rotate(-4.700 1058 448)" />
      <ellipse cx="1034" cy="448" rx="72.500" ry="11" fill="url(#bore)" transform="rotate(-3 1034 448)" />
      <ellipse cx="925" cy="452.500" rx="8" ry="1.800" fill="#555" />
      <ellipse cx="958" cy="468.500" rx="12" ry="2.200" fill="url(#small)" />
      <ellipse cx="1047" cy="430.500" rx="8" ry="1.800" fill="#555" />
      <ellipse cx="1156" cy="433.500" rx="11" ry="2.500" fill="url(#small)" />
      <ellipse cx="1179" cy="430" rx="8" ry="1.800" fill="#666" />
      {[[856, 497], [923, 506], [989, 515]].map(([x, y]) => (
        <g key={x}>
          <ellipse cx={x} cy={y} rx="4.800" ry="8.500" fill="#4c4c4c" transform={`rotate(-6 ${x} ${y})`} />
          <path d={`M${x} ${y - 7}q4 7 1 14`} fill="none" stroke="#333" />
        </g>
      ))}
      <ellipse cx="835" cy="545" rx="2.800" ry="4.500" fill="#606060" />

      {/* front flange */}
      <path d="M1002 488 1308 433Q1311 433 1311 436L1326 632C1328 690 1305 735 1292 757C1262 800 1215 830 1165 830C1100 830 1018 765 1015 663z" fill="#696969" />
      <g clipPath="url(#holeClip)">
        <path d="M1040 480h270v330h-270z" fill="url(#ring)" stroke="none" />
        <path d="M1172 491C1220 505 1261 560 1261 626C1261 700 1210 785 1135 792L1040 800V480z" fill="url(#inner)" />
        <path d="M1100 480 1106 594C1108 645 1094 692 1063 730L1030 740V480z" fill="#c8cbd3" />
        <path d="M1106 594 1259 614" />
        <ellipse cx="1131" cy="587" rx="2.500" ry="4.200" fill="#444" />
      </g>
      <circle r="1" transform="matrix(127 -5 -5 153 1171 644)" fill="none" vectorEffect="non-scaling-stroke" />
      {boreHoles.map(([x, y]) => (
        <ellipse key={x} cx={x} cy={y} rx="6.800" ry="8" fill="#4b4b4b" />
      ))}

      {/* left arm */}
      <path d="M1005 583 1015 671 978 666" fill="none" />
      <path d="M757 595Q760 588 790 581L863 569V564L867 565 1005 583 972 584 865 597Q820 603 780 601Q756 599 757 595z" fill="#5f5f5f" />
      <path d="M757 595Q762 589 775 588L806 591 817 594 873 590 845 598Q800 603 775 600Q757 599 757 595z" fill="#f00" stroke="none" />
      <path d="M757 597Q775 603 823 601L850 598 855 681Q800 686 775 682Q764 680 763 678z" fill="url(#red)" stroke="none" />
      <path d="M848 599 865 597 871 679 854 681z" fill="#8c8c8c" stroke="none" />
      <path d="M865 597 972 584 978 666 871 679z" fill="#9c9c9c" />
      <path d="M972 584 1005 583 1012 665 978 666z" fill="url(#fillet)" />
      <path d="M757 595 763 678Q775 684 823 683L854 681 871 679M757 597Q775 603 823 601L865 597" fill="none" />
      {[[788, 590], [824, 597], [854, 579], [891, 586]].map(([x, y]) => (
        <ellipse key={x} cx={x} cy={y} rx="14.500" ry="2.700" fill="url(#small)" />
      ))}
    </g>

    <path d="M956 397 996 888" stroke="#0a0a0a" strokeWidth="1.800" />

    <path d="M1087 816 1103 818" stroke="#f00" strokeWidth="2.500" />
    <circle cx="1105" cy="818" r="3.800" fill="#f00" />
    <path d="m1086 815 26-4" stroke="#0f0" strokeWidth="3.500" />
    <path d="m1111 805 10 4-8 6z" fill="#0f0" />

    {/* triad */}
    <path d="m270 986 22-4" stroke="#7d4a50" strokeWidth="2.500" />
    <path d="m286 978 9 3-6 6z" fill="#8a3f48" stroke="#5c3038" />
    <path d="m270 986-1-22" stroke="#3fa184" strokeWidth="3.500" />
    <path d="m264 966 5-10 5 10z" fill="#2f8a6d" />
    <path d="m270 986 10 1" stroke="#2c4f70" strokeWidth="4" />
    <ellipse cx="283" cy="987" rx="5" ry="4.500" fill="#3b74a5" />
    <g fontFamily="Open Sans, sans-serif" fontSize="11">
      <text x="265" y="954" fill="#3aa58a">Y</text>
      <text x="295" y="985" fill="#e57b80">X</text>
      <text x="285" y="992" fill="#4a93cf">Z</text>
    </g>
  </svg>
);

const taskPane = [
  { name: 'Resources', icon: <Svg><path d="M4 9v8h10V9" fill="#fff" stroke="#333" /><path d="m1 10 8-9 8 9-2 1-6-6-6 6z" fill="#2a7fb0" stroke="#174b69" /><path d="M8 17v-5h3v5" stroke="#333" /></Svg> },
  { name: 'Design Library', icon: <Svg><path d="m2 5 3-2 2 1 3-3 2 1 3-1 2 2v11l-5 3-3-1-2 1-3-1-2-2z" fill="#ececec" stroke="#333" /><path d="m2 5 2 1v10M4 6l3-2M7 4v2l1 11M8 6l4-4M12 2v3v12M12 5l5-2M7 5.500 8 6" stroke="#333" /></Svg> },
  { name: 'File Explorer', icon: <Svg><path d="M1 16V2h5l2 2h7v3" fill="#c8c8c8" stroke="#333" /><path d="M1 17 5 6h12l-4 11z" fill="#f4f4f4" stroke="#333" /></Svg> },
  { name: 'View Palette', icon: <Svg><path d="M.5 1.500h17v15H.5z" fill="#f3f3f3" stroke="#333" /><path d="M3 4h6v3H3zM11 4h4v3h-4zM5 10h5v2h2v3H3v-3h2z" fill="#f0c02c" stroke="#8a6514" /></Svg> },
  { name: 'Appearances', icon: <BallIcon /> },
  { name: 'Custom Properties', icon: <PropsIcon /> },
  { name: 'Forum', icon: <Svg><path d="M1 2h10v8H5l-2 3v-3H1z" fill="#2a86b8" stroke="#174b69" /><path d="M7 7h10v7h-2v3l-3-3H7z" fill="#f4f4f4" stroke="#333" /></Svg> },
];

const Viewport = () => (
  <div className="relative flex min-w-0 flex-1 items-start">
    <button aria-label="Collapse panel" className="absolute top-[421px] left-0 flex h-[39px] w-2 items-center justify-center border border-l-0 border-[#808080] bg-[#f7f7f7]">
      <span className="h-1.5 w-1.5 rounded-full border border-[#999] bg-[#ccc]" />
    </button>
    <div className="relative mt-[7px] ml-1.5 flex items-center">
      <svg width="5" height="8" aria-hidden="true"><path d="M0 0v8l5-4z" fill="#222" /></svg>
      <span className="ml-3.5"><PartIcon /></span>
      <span className="ml-[3px] font-['Noto_Sans',sans-serif] leading-4 text-black">JR-313232 Fixed Plate, Tilt...</span>
    </div>
    <div className="relative mt-2.5 ml-auto flex gap-4 pr-1.5">
      <Svg size={30}><path d="m1 9 3-2 3 3 6-9 4 2-10 14z" fill="#a2c1a5" /></Svg>
      <Svg size={26} className="mt-8"><path d="M2 4l3-3 4 5 4-5 3 3-4 5 4 6-3 2-4-5-4 5-3-2 4-6z" fill="#cf949d" stroke="#c08790" /></Svg>
    </div>
    <div className="relative mt-7 flex w-[26px] flex-col border-t border-l border-[#808080]">
      {taskPane.map((t, i) => (
        <button key={t.name} aria-label={t.name} className={`flex h-6 items-center border-b border-[#808080] pl-[3px] ${i === 0 ? 'bg-white' : 'bg-[#d4d4d4]'}`}>
          {t.icon}
        </button>
      ))}
    </div>
  </div>
);

const navPaths = ['M4 2v10M12 2v10L6 7z', 'M10 2v10L4 7z', 'M5 2v10l6-5z', 'M3 2v10l6-5zM11 2v10'];

const BottomTabs = () => (
  <div className="flex h-4 shrink-0 border-t border-b border-[#808080] bg-[#f7f7f7] font-['Noto_Sans',sans-serif]">
    <div className="flex w-[67px] gap-px bg-[#b4b4b4] pl-0.5">
      {navPaths.map((d) => (
        <button key={d} aria-label="Scroll tabs" className="flex w-[15px] items-center justify-center border border-[#c8c8c8] bg-[#a8a8a8]">
          <svg width="14" height="13" viewBox="0 0 14 14" aria-hidden="true"><path d={d} fill="#8a8a8a" stroke="#858585" /></svg>
        </button>
      ))}
    </div>
    <button className="w-[57px] border-r border-[#808080] bg-white leading-[14px] font-bold text-black">Model</button>
    <button className="w-[68px] border-r border-[#808080] bg-[#d4d4d4] leading-[14px]">3D Views</button>
    <button className="w-[108px] border-r border-[#808080] bg-[#d4d4d4] pr-2.5 leading-[14px]">Motion Study 1</button>
  </div>
);

const StatusBar = () => (
  <footer className="flex h-[21px] shrink-0 items-center border-b-2 border-[#1b2230] bg-[#f7f7f7] pl-px font-['Noto_Sans',sans-serif] text-black">
    <span>JR-313232 Fixed Plate, Tilt-A-Jet</span>
    <span className="mr-[21px] ml-auto">Editing Part</span>
    <span className="h-4 w-px bg-[#d0d0d0]" />
    <button className="flex w-[155px] items-center gap-7 pl-[41px] text-[#a8a8a8]">IPS<Caret up /></button>
    <Svg className="mr-1"><path d="m1 8 4-5 12 4-3 8-5 2-7-5z" fill="#eee" stroke="#333" /><path d="m3 10 7 4 4-6M6 6l4 2M10 14v3" stroke="#333" /></Svg>
  </footer>
);

export default function App() {
  return (
    <div className="relative flex h-screen flex-col overflow-hidden bg-[#c4c8d4] font-['Open_Sans','Noto_Sans',sans-serif] text-[11px] text-[#111]">
      <TitleBar />
      <Ribbon />
      <div className="relative flex min-h-0 flex-1 flex-col">
        <TabRow />
        <main className="flex min-h-0 flex-1">
          <PropertyPanel />
          <div className="relative flex flex-1">
            <Model />
            <Viewport />
          </div>
        </main>
      </div>
      <BottomTabs />
      <StatusBar />
      <svg width="14" height="20" viewBox="0 0 14 20" className="pointer-events-none absolute top-[591px] left-[122px] z-30" aria-hidden="true">
        <path d="M1 1v15l3-3 3 6 3-1-3-6h5z" fill="#fff" stroke="#222" />
      </svg>
      <div className="pointer-events-none absolute right-0.5 bottom-1.5 z-30 font-['Liberation_Sans','Noto_Sans_CJK_SC',sans-serif] text-[36px] whitespace-nowrap text-[#dcdce0] [text-shadow:1px_1px_1px_#777]">
        CSDN @大腾智能
      </div>
    </div>
  );
}
